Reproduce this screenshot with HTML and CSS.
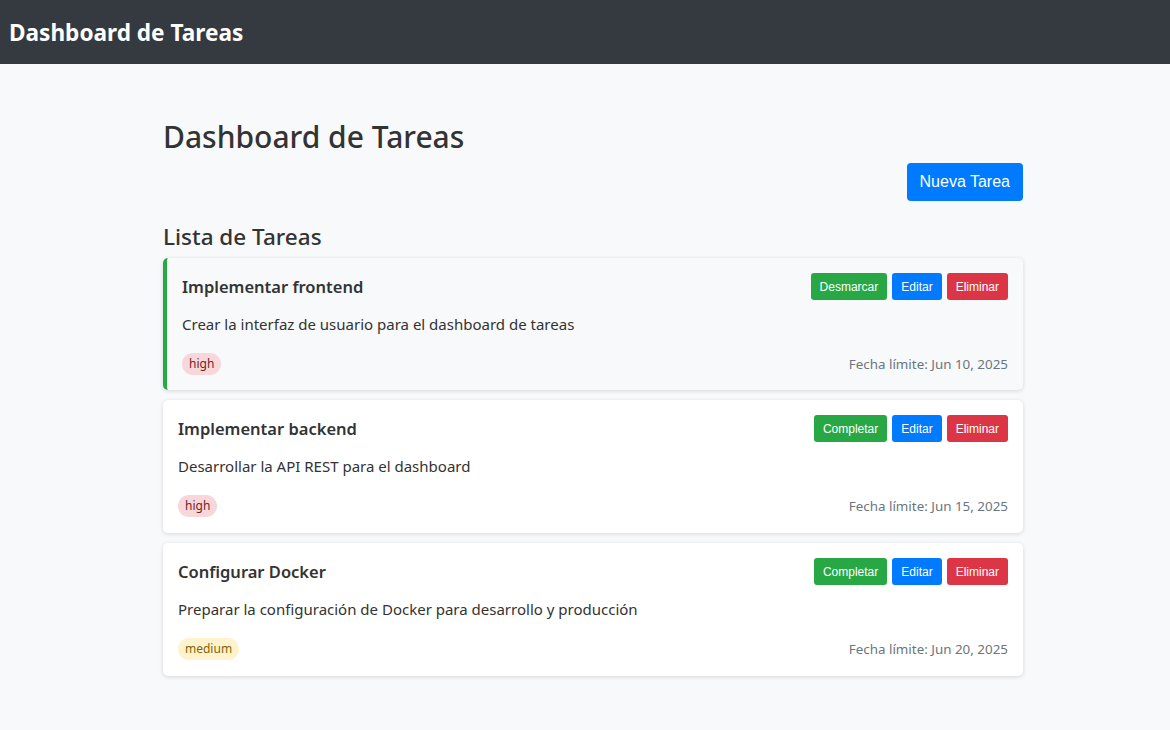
FILE: index.html
```html
<!DOCTYPE html>
<html lang="es">
<head>
<meta charset="utf-8">
<title>Dashboard de Tareas</title>
<link rel="stylesheet" href="styles.css">
</head>
<body>
<header class="navbar">
  <span class="brand">Dashboard de Tareas</span>
</header>
<main class="container">
  <h1 class="page-title">Dashboard de Tareas</h1>
  <div class="actions">
    <button class="btn btn-primary btn-lg">Nueva Tarea</button>
  </div>
  <h2 class="section-title">Lista de Tareas</h2>
  <div class="task-list">
    <div class="task-card completed">
      <div class="task-header">
        <h3 class="task-title">Implementar frontend</h3>
        <div class="task-buttons">
          <button class="btn btn-success">Desmarcar</button>
          <button class="btn btn-primary">Editar</button>
          <button class="btn btn-danger">Eliminar</button>
        </div>
      </div>
      <p class="task-desc">Crear la interfaz de usuario para el dashboard de tareas</p>
      <div class="task-footer">
        <span class="badge badge-high">high</span>
        <span class="due">Fecha límite: Jun 10, 2025</span>
      </div>
    </div>
    <div class="task-card">
      <div class="task-header">
        <h3 class="task-title">Implementar backend</h3>
        <div class="task-buttons">
          <button class="btn btn-success">Completar</button>
          <button class="btn btn-primary">Editar</button>
          <button class="btn btn-danger">Eliminar</button>
        </div>
      </div>
      <p class="task-desc">Desarrollar la API REST para el dashboard</p>
      <div class="task-footer">
        <span class="badge badge-high">high</span>
        <span class="due">Fecha límite: Jun 15, 2025</span>
      </div>
    </div>
    <div class="task-card">
      <div class="task-header">
        <h3 class="task-title">Configurar Docker</h3>
        <div class="task-buttons">
          <button class="btn btn-success">Completar</button>
          <button class="btn btn-primary">Editar</button>
          <button class="btn btn-danger">Eliminar</button>
        </div>
      </div>
      <p class="task-desc">Preparar la configuración de Docker para desarrollo y producción</p>
      <div class="task-footer">
        <span class="badge badge-medium">medium</span>
        <span class="due">Fecha límite: Jun 20, 2025</span>
      </div>
    </div>
  </div>
</main>
</body>
</html>
```
FILE: styles.css
```css
* { box-sizing: border-box; }
html, body { margin: 0; padding: 0; }
body {
  background: #f8f9fa;
  font-family: "Noto Sans", "Open Sans", sans-serif;
  color: #333;
}
.navbar {
  background: #343a40;
  height: 64px;
  display: flex;
  align-items: center;
  padding: 0 9px;
}
.brand {
  color: #fff;
  font-size: 22.6px;
  font-weight: 700;
}
.container {
  width: 860px;
  margin-left: calc(50% - 422px);
  padding-top: 54px;
  padding-bottom: 40px;
}
.page-title {
  font-size: 30px;
  font-weight: 500;
  line-height: 38px;
  margin: 0;
  color: #333;
}
.actions {
  display: flex;
  justify-content: flex-end;
  margin-top: 7px;
}
.btn {
  font-family: "Liberation Sans", Arial, sans-serif;
  border: none;
  border-radius: 3px;
  color: #fff;
  font-size: 12px;
  height: 27px;
  padding: 0 9px;
  cursor: pointer;
}
.btn-lg {
  font-size: 16px;
  height: 38px;
  padding: 0 13px;
  border-radius: 4px;
}
.btn-primary { background: #007bff; }
.btn-success { background: #28a745; }
.btn-danger { background: #dc3545; }
.section-title {
  font-size: 22.5px;
  font-weight: 500;
  line-height: 30px;
  margin: 21px 0 6px;
  color: #333;
}
.task-list {
  display: flex;
  flex-direction: column;
  gap: 10px;
}
.task-card {
  background: #fff;
  border-radius: 5px;
  box-shadow: 0 1px 4px rgba(0, 0, 0, 0.14);
  padding: 15px 15px 16px;
}
.task-card.completed {
  background: #f8f9fa;
  border-left: 4px solid #28a745;
  padding-bottom: 15px;
}
.task-header {
  display: flex;
  justify-content: space-between;
  align-items: center;
}
.task-title {
  margin: 0;
  font-size: 16.5px;
  font-weight: 600;
  color: #333;
}
.task-buttons {
  display: flex;
  gap: 5px;
}
.task-desc {
  margin: 12px 0 17px;
  font-size: 15px;
  line-height: 24px;
  color: #333;
}
.task-footer {
  display: flex;
  justify-content: space-between;
  align-items: center;
}
.badge {
  font-size: 12px;
  line-height: 22px;
  padding: 0 7px;
  border-radius: 11px;
}
.badge-high { background: #f8d7da; color: #721c24; }
.badge-medium { background: #fff3cd; color: #856404; }
.due {
  font-size: 13.4px;
  color: #6c757d;
}
```
